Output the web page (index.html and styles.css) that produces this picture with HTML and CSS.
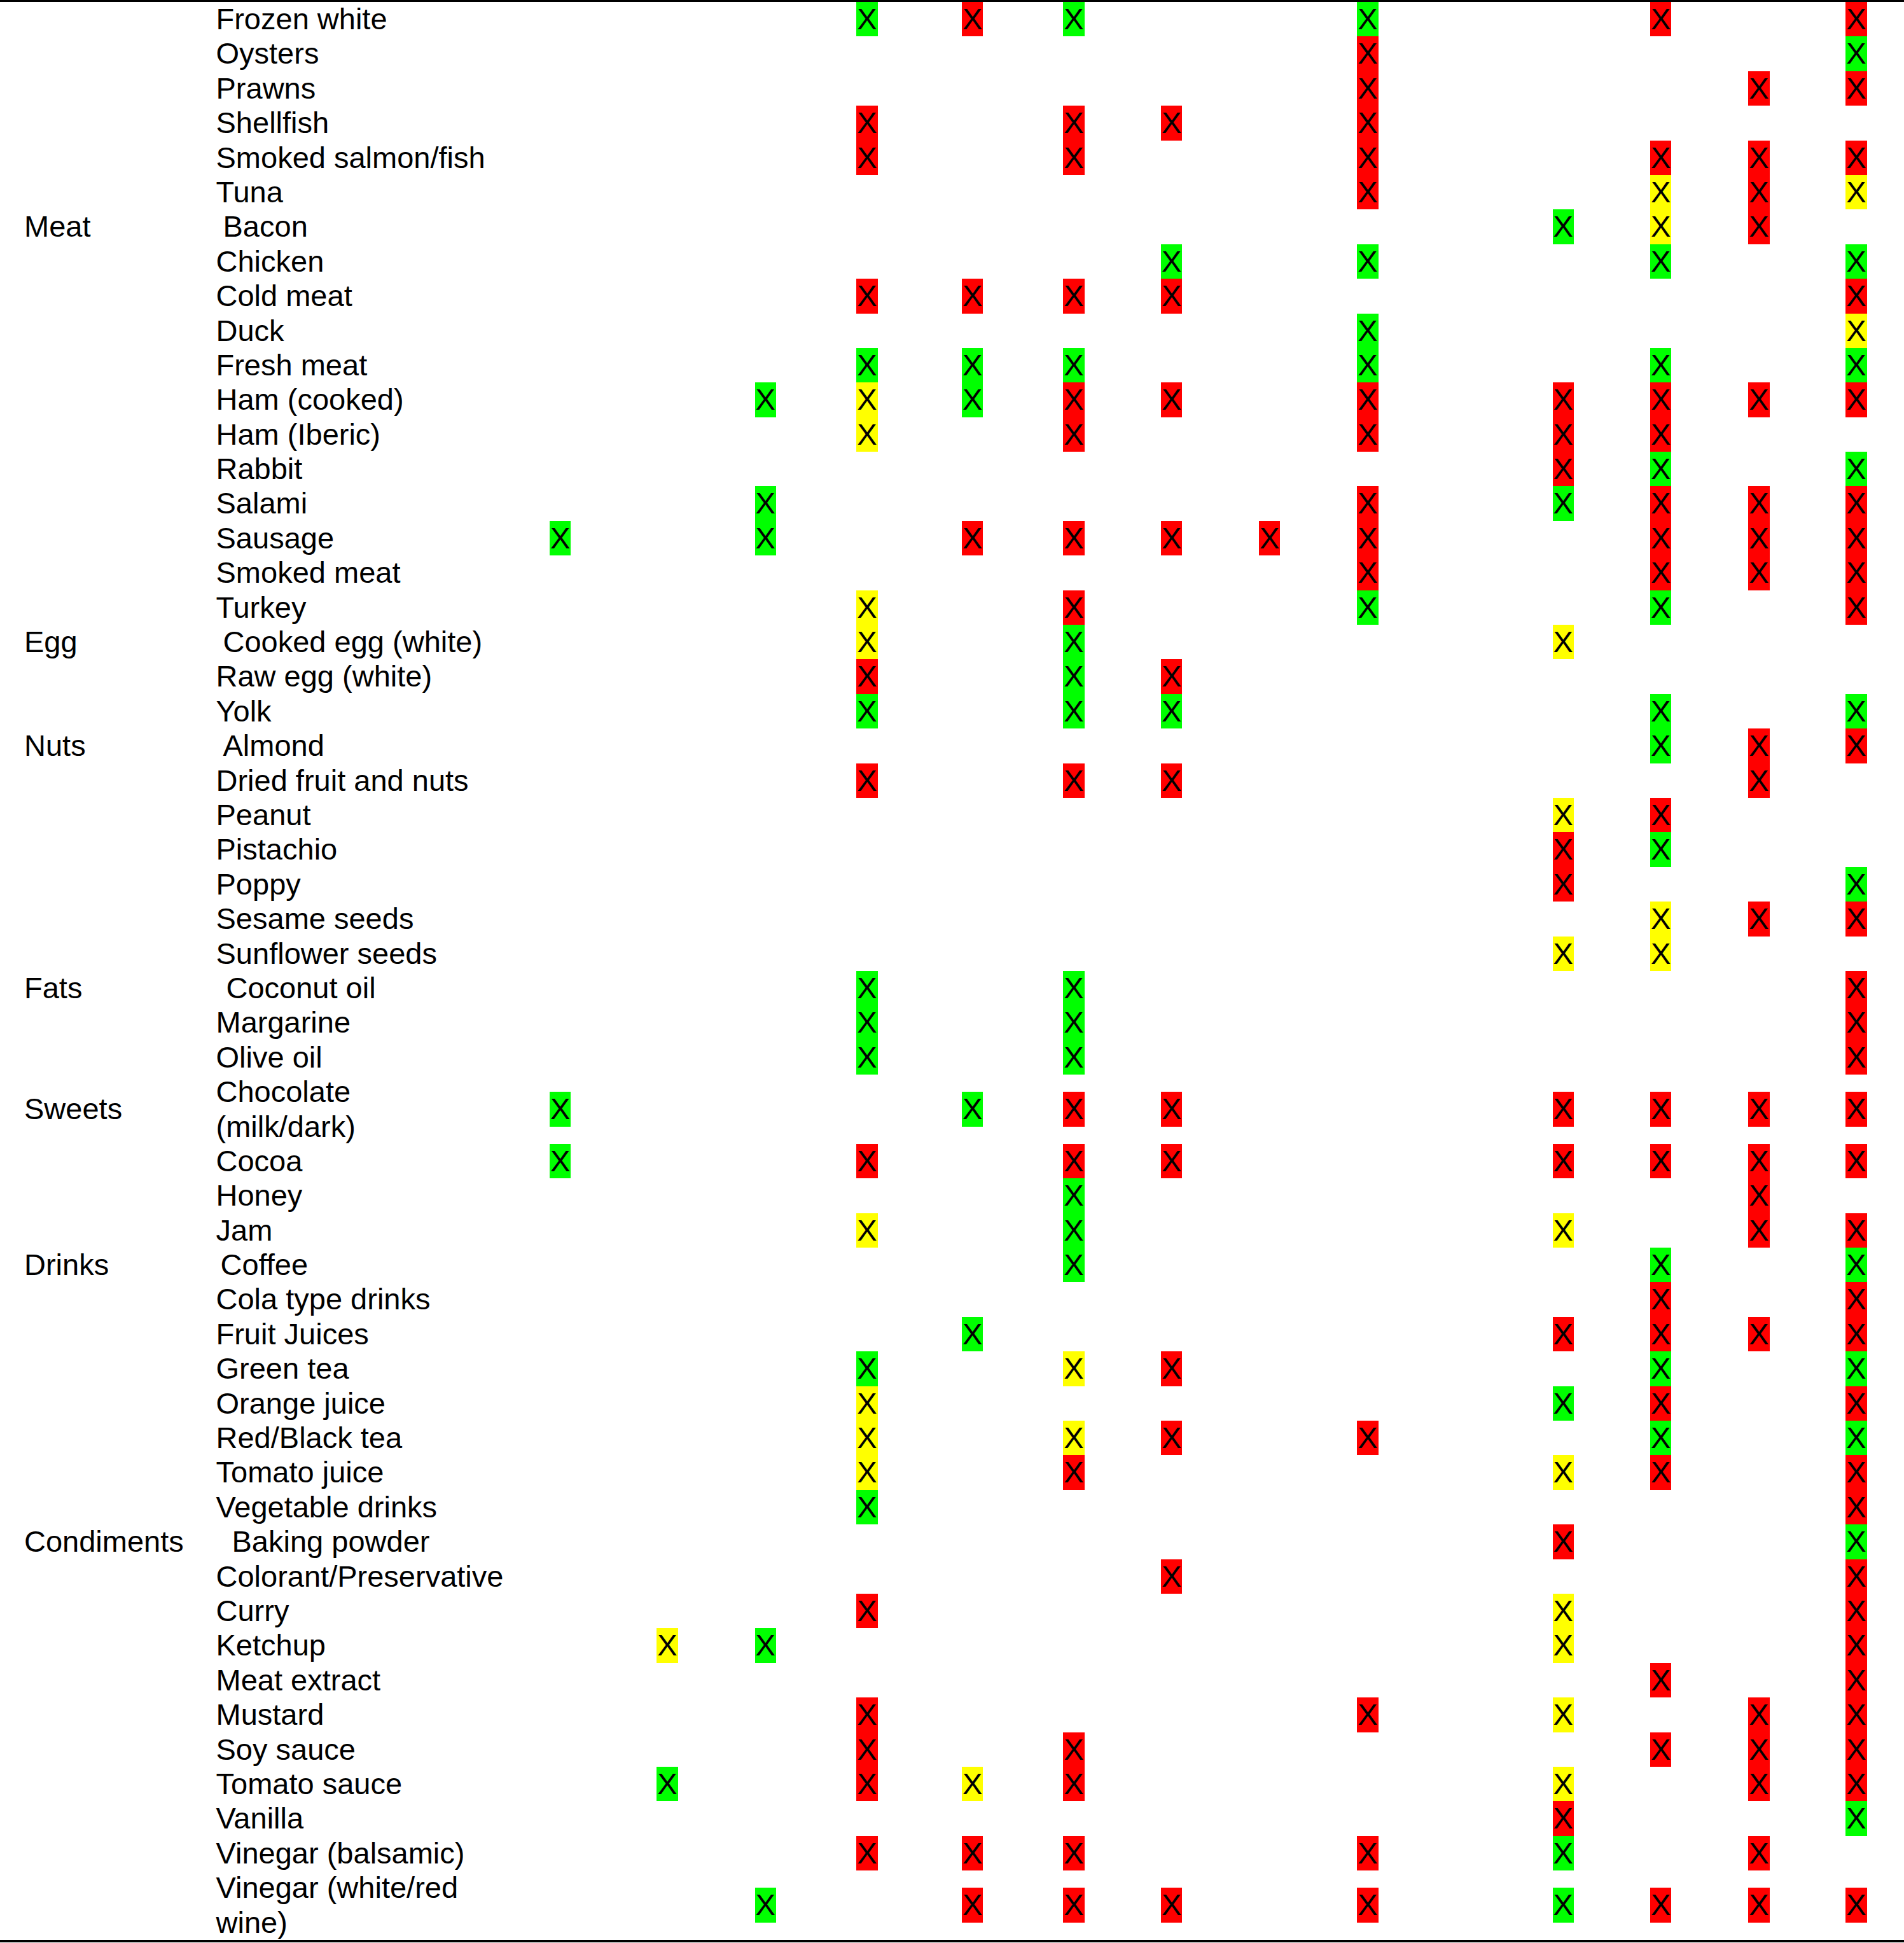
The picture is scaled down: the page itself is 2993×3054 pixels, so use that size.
FILE: index.html
```html
<!DOCTYPE html>
<html lang="en">
<head>
<meta charset="utf-8">
<title>Food table</title>
<link rel="stylesheet" href="styles.css">
</head>
<body>
<div class="table">
  <div class="row"><span class="item">Frozen white</span><span class="x g c4">X</span><span class="x r c5">X</span><span class="x g c6">X</span><span class="x g c9">X</span><span class="x r c12">X</span><span class="x r c14">X</span></div>
  <div class="row"><span class="item">Oysters</span><span class="x r c9">X</span><span class="x g c14">X</span></div>
  <div class="row"><span class="item">Prawns</span><span class="x r c9">X</span><span class="x r c13">X</span><span class="x r c14">X</span></div>
  <div class="row"><span class="item">Shellfish</span><span class="x r c4">X</span><span class="x r c6">X</span><span class="x r c7">X</span><span class="x r c9">X</span></div>
  <div class="row"><span class="item">Smoked salmon/fish</span><span class="x r c4">X</span><span class="x r c6">X</span><span class="x r c9">X</span><span class="x r c12">X</span><span class="x r c13">X</span><span class="x r c14">X</span></div>
  <div class="row"><span class="item">Tuna</span><span class="x r c9">X</span><span class="x y c12">X</span><span class="x r c13">X</span><span class="x y c14">X</span></div>

  <div class="row"><span class="cat">Meat</span><span class="item ind-a">Bacon</span><span class="x g c11">X</span><span class="x y c12">X</span><span class="x r c13">X</span></div>
  <div class="row"><span class="item">Chicken</span><span class="x g c7">X</span><span class="x g c9">X</span><span class="x g c12">X</span><span class="x g c14">X</span></div>
  <div class="row"><span class="item">Cold meat</span><span class="x r c4">X</span><span class="x r c5">X</span><span class="x r c6">X</span><span class="x r c7">X</span><span class="x r c14">X</span></div>
  <div class="row"><span class="item">Duck</span><span class="x g c9">X</span><span class="x y c14">X</span></div>
  <div class="row"><span class="item">Fresh meat</span><span class="x g c4">X</span><span class="x g c5">X</span><span class="x g c6">X</span><span class="x g c9">X</span><span class="x g c12">X</span><span class="x g c14">X</span></div>
  <div class="row"><span class="item">Ham (cooked)</span><span class="x g c3">X</span><span class="x y c4">X</span><span class="x g c5">X</span><span class="x r c6">X</span><span class="x r c7">X</span><span class="x r c9">X</span><span class="x r c11">X</span><span class="x r c12">X</span><span class="x r c13">X</span><span class="x r c14">X</span></div>
  <div class="row"><span class="item">Ham (Iberic)</span><span class="x y c4">X</span><span class="x r c6">X</span><span class="x r c9">X</span><span class="x r c11">X</span><span class="x r c12">X</span></div>
  <div class="row"><span class="item">Rabbit</span><span class="x r c11">X</span><span class="x g c12">X</span><span class="x g c14">X</span></div>
  <div class="row"><span class="item">Salami</span><span class="x g c3">X</span><span class="x r c9">X</span><span class="x g c11">X</span><span class="x r c12">X</span><span class="x r c13">X</span><span class="x r c14">X</span></div>
  <div class="row"><span class="item">Sausage</span><span class="x g c1">X</span><span class="x g c3">X</span><span class="x r c5">X</span><span class="x r c6">X</span><span class="x r c7">X</span><span class="x r c8">X</span><span class="x r c9">X</span><span class="x r c12">X</span><span class="x r c13">X</span><span class="x r c14">X</span></div>
  <div class="row"><span class="item">Smoked meat</span><span class="x r c9">X</span><span class="x r c12">X</span><span class="x r c13">X</span><span class="x r c14">X</span></div>
  <div class="row"><span class="item">Turkey</span><span class="x y c4">X</span><span class="x r c6">X</span><span class="x g c9">X</span><span class="x g c12">X</span><span class="x r c14">X</span></div>

  <div class="row"><span class="cat">Egg</span><span class="item ind-a">Cooked egg (white)</span><span class="x y c4">X</span><span class="x g c6">X</span><span class="x y c11">X</span></div>
  <div class="row"><span class="item">Raw egg (white)</span><span class="x r c4">X</span><span class="x g c6">X</span><span class="x r c7">X</span></div>
  <div class="row"><span class="item">Yolk</span><span class="x g c4">X</span><span class="x g c6">X</span><span class="x g c7">X</span><span class="x g c12">X</span><span class="x g c14">X</span></div>

  <div class="row"><span class="cat">Nuts</span><span class="item ind-a">Almond</span><span class="x g c12">X</span><span class="x r c13">X</span><span class="x r c14">X</span></div>
  <div class="row"><span class="item">Dried fruit and nuts</span><span class="x r c4">X</span><span class="x r c6">X</span><span class="x r c7">X</span><span class="x r c13">X</span></div>
  <div class="row"><span class="item">Peanut</span><span class="x y c11">X</span><span class="x r c12">X</span></div>
  <div class="row"><span class="item">Pistachio</span><span class="x r c11">X</span><span class="x g c12">X</span></div>
  <div class="row"><span class="item">Poppy</span><span class="x r c11">X</span><span class="x g c14">X</span></div>
  <div class="row"><span class="item">Sesame seeds</span><span class="x y c12">X</span><span class="x r c13">X</span><span class="x r c14">X</span></div>
  <div class="row"><span class="item">Sunflower seeds</span><span class="x y c11">X</span><span class="x y c12">X</span></div>

  <div class="row"><span class="cat">Fats</span><span class="item ind-b">Coconut oil</span><span class="x g c4">X</span><span class="x g c6">X</span><span class="x r c14">X</span></div>
  <div class="row"><span class="item">Margarine</span><span class="x g c4">X</span><span class="x g c6">X</span><span class="x r c14">X</span></div>
  <div class="row"><span class="item">Olive oil</span><span class="x g c4">X</span><span class="x g c6">X</span><span class="x r c14">X</span></div>

  <div class="row tall"><span class="cat">Sweets</span><span class="item">Chocolate<br>(milk/dark)</span><span class="x g c1">X</span><span class="x g c5">X</span><span class="x r c6">X</span><span class="x r c7">X</span><span class="x r c11">X</span><span class="x r c12">X</span><span class="x r c13">X</span><span class="x r c14">X</span></div>
  <div class="row"><span class="item">Cocoa</span><span class="x g c1">X</span><span class="x r c4">X</span><span class="x r c6">X</span><span class="x r c7">X</span><span class="x r c11">X</span><span class="x r c12">X</span><span class="x r c13">X</span><span class="x r c14">X</span></div>
  <div class="row"><span class="item">Honey</span><span class="x g c6">X</span><span class="x r c13">X</span></div>
  <div class="row"><span class="item">Jam</span><span class="x y c4">X</span><span class="x g c6">X</span><span class="x y c11">X</span><span class="x r c13">X</span><span class="x r c14">X</span></div>

  <div class="row"><span class="cat">Drinks</span><span class="item ind-c">Coffee</span><span class="x g c6">X</span><span class="x g c12">X</span><span class="x g c14">X</span></div>
  <div class="row"><span class="item">Cola type drinks</span><span class="x r c12">X</span><span class="x r c14">X</span></div>
  <div class="row"><span class="item">Fruit Juices</span><span class="x g c5">X</span><span class="x r c11">X</span><span class="x r c12">X</span><span class="x r c13">X</span><span class="x r c14">X</span></div>
  <div class="row"><span class="item">Green tea</span><span class="x g c4">X</span><span class="x y c6">X</span><span class="x r c7">X</span><span class="x g c12">X</span><span class="x g c14">X</span></div>
  <div class="row"><span class="item">Orange juice</span><span class="x y c4">X</span><span class="x g c11">X</span><span class="x r c12">X</span><span class="x r c14">X</span></div>
  <div class="row"><span class="item">Red/Black tea</span><span class="x y c4">X</span><span class="x y c6">X</span><span class="x r c7">X</span><span class="x r c9">X</span><span class="x g c12">X</span><span class="x g c14">X</span></div>
  <div class="row"><span class="item">Tomato juice</span><span class="x y c4">X</span><span class="x r c6">X</span><span class="x y c11">X</span><span class="x r c12">X</span><span class="x r c14">X</span></div>
  <div class="row"><span class="item">Vegetable drinks</span><span class="x g c4">X</span><span class="x r c14">X</span></div>

  <div class="row"><span class="cat">Condiments</span><span class="item ind-d">Baking powder</span><span class="x r c11">X</span><span class="x g c14">X</span></div>
  <div class="row"><span class="item">Colorant/Preservative</span><span class="x r c7">X</span><span class="x r c14">X</span></div>
  <div class="row"><span class="item">Curry</span><span class="x r c4">X</span><span class="x y c11">X</span><span class="x r c14">X</span></div>
  <div class="row"><span class="item">Ketchup</span><span class="x y c2">X</span><span class="x g c3">X</span><span class="x y c11">X</span><span class="x r c14">X</span></div>
  <div class="row"><span class="item">Meat extract</span><span class="x r c12">X</span><span class="x r c14">X</span></div>
  <div class="row"><span class="item">Mustard</span><span class="x r c4">X</span><span class="x r c9">X</span><span class="x y c11">X</span><span class="x r c13">X</span><span class="x r c14">X</span></div>
  <div class="row"><span class="item">Soy sauce</span><span class="x r c4">X</span><span class="x r c6">X</span><span class="x r c12">X</span><span class="x r c13">X</span><span class="x r c14">X</span></div>
  <div class="row"><span class="item">Tomato sauce</span><span class="x g c2">X</span><span class="x r c4">X</span><span class="x y c5">X</span><span class="x r c6">X</span><span class="x y c11">X</span><span class="x r c13">X</span><span class="x r c14">X</span></div>
  <div class="row"><span class="item">Vanilla</span><span class="x r c11">X</span><span class="x g c14">X</span></div>
  <div class="row"><span class="item">Vinegar (balsamic)</span><span class="x r c4">X</span><span class="x r c5">X</span><span class="x r c6">X</span><span class="x r c9">X</span><span class="x g c11">X</span><span class="x r c13">X</span></div>
  <div class="row tall"><span class="item">Vinegar (white/red<br>wine)</span><span class="x g c3">X</span><span class="x r c5">X</span><span class="x r c6">X</span><span class="x r c7">X</span><span class="x r c9">X</span><span class="x g c11">X</span><span class="x r c12">X</span><span class="x r c13">X</span><span class="x r c14">X</span></div>
</div>
</body>
</html>
```

FILE: styles.css
```css
html, body {
  margin: 0;
  padding: 0;
  background: #ffffff;
}

body {
  font-family: "Liberation Sans", Arial, Helvetica, sans-serif;
  color: #000000;
}

.table {
  width: 2993px;
  border-top: 3px solid #000000;
  border-bottom: 4px solid #000000;
}

.row {
  display: grid;
  grid-template-columns: 339.5px 441.2px 200px 136.6px 172px 147.4px 184px 134.6px 172.8px 135.2px 173.4px 134.6px 172px 134.8px 173.8px 132.2px;
  height: 54.4px;
  align-items: center;
  font-size: 47px;
  line-height: 54.4px;
}

.row.tall {
  height: 108.8px;
}

.cat {
  grid-column: 1;
  grid-row: 1;
  padding-left: 38px;
  white-space: nowrap;
}

.item {
  grid-column: 2;
  grid-row: 1;
  white-space: nowrap;
}

.ind-a { padding-left: 11px; }
.ind-b { padding-left: 16px; }
.ind-c { padding-left: 7px; }
.ind-d { padding-left: 25px; }

.x {
  grid-row: 1;
  justify-self: center;
  width: 33.3px;
  height: 54.4px;
  text-align: center;
}

.g { background: #00ff00; }
.r { background: #ff0000; }
.y { background: #ffff00; }

.c1 { grid-column: 3; }
.c2 { grid-column: 4; }
.c3 { grid-column: 5; }
.c4 { grid-column: 6; }
.c5 { grid-column: 7; }
.c6 { grid-column: 8; }
.c7 { grid-column: 9; }
.c8 { grid-column: 10; }
.c9 { grid-column: 11; }
.c10 { grid-column: 12; }
.c11 { grid-column: 13; }
.c12 { grid-column: 14; }
.c13 { grid-column: 15; }
.c14 { grid-column: 16; }
```
